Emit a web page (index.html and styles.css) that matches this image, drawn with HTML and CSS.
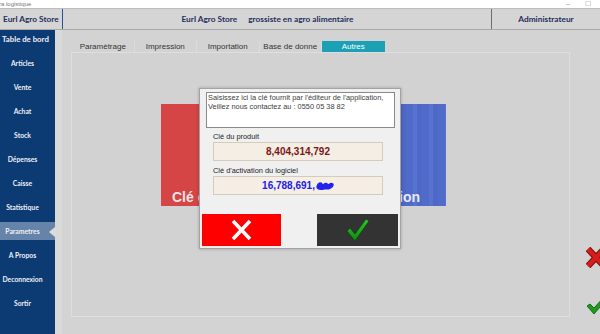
FILE: index.html
```html
<!DOCTYPE html>
<html lang="fr">
<head>
<meta charset="utf-8">
<title>Eurl Agro Store</title>
<link rel="stylesheet" href="styles.css">
</head>
<body>
<div class="titlebar">
  <span class="apptitle">ra logistique</span>
  <span class="winctl"><span>–</span><span>☐</span></span>
</div>
<header class="header">
  <div class="brand">Eurl Agro Store</div>
  <div class="headline"><span>Eurl Agro Store</span><span>grossiste en agro alimentaire</span></div>
  <div class="user">Administrateur</div>
</header>
<div class="app">
  <nav class="sidebar">
    <div class="navitem first">Table de bord</div>
    <div class="navitem">Articles</div>
    <div class="navitem">Vente</div>
    <div class="navitem">Achat</div>
    <div class="navitem">Stock</div>
    <div class="navitem">Dépenses</div>
    <div class="navitem">Caisse</div>
    <div class="navitem">Statistique</div>
    <div class="navitem active">Parametres</div>
    <div class="navitem">A Propos</div>
    <div class="navitem">Deconnexion</div>
    <div class="navitem">Sortir</div>
  </nav>
  <main class="main">
    <div class="tabarea">
      <div class="tabs">
        <div class="tab">Paramètrage</div>
        <div class="tab">Impression</div>
        <div class="tab">Importation</div>
        <div class="tab">Base de donne</div>
        <div class="tab active">Autres</div>
      </div>
      <div class="panel">
        <div class="tiles">
          <div class="tile tile-red">Clé d'activation</div>
          <div class="tile tile-blue">Activation</div>
        </div>
      </div>
    </div>
    <div class="actions">
      <svg class="side-x" width="20" height="21" viewBox="0 0 20 21">
        <path d="M2 2 L18 19 M18 2 L2 19" stroke="#7a0c0c" stroke-width="6.5" fill="none"/>
        <path d="M2 2 L18 19 M18 2 L2 19" stroke="#d71c1c" stroke-width="4.5" fill="none"/>
      </svg>
      <svg class="side-check" width="20" height="17" viewBox="0 0 20 17">
        <polygon points="0,9 3,7 7,11 17,0 20,2 7,17" fill="#1c9c1c" stroke="#0b560b" stroke-width="0.8"/>
      </svg>
    </div>
  </main>
</div>

<div class="dialog">
  <div class="note">Saisissez ici la clé fournit par l'éditeur de l'application,<br>Veillez nous contactez au : 0550 05 38 82</div>
  <div class="label">Clé du produit</div>
  <div class="field field-product">8,404,314,792</div>
  <div class="label">Clé d'activation du logiciel</div>
  <div class="field field-key">16,788,691,<svg class="blob" width="18" height="10" viewBox="0 0 18 10"><path d="M1.5 6.5 C2 2,5 1.5,6 4 C7 7,9 1,11 3.5 C13 6,14 1.5,16.5 3.5 C17 6,12 8,9 7 C6 8,3 9,1.5 6.5 Z" fill="#2323ee" stroke="#2323ee" stroke-width="2.4" stroke-linejoin="round"/></svg></div>
  <div class="buttons">
    <div class="btn btn-cancel">
      <svg width="21" height="22" viewBox="0 0 21 22"><path d="M2 2 L19 20 M19 2 L2 20" stroke="#ffffff" stroke-width="3.6" fill="none"/></svg>
    </div>
    <div class="btn btn-ok">
      <svg width="22" height="22" viewBox="0 0 22 22">
        <defs><linearGradient id="g" x1="0" y1="0" x2="0" y2="1"><stop offset="0" stop-color="#33c433"/><stop offset="1" stop-color="#0d8a0d"/></linearGradient></defs>
        <polygon points="0,12 3,9 8,15 19,0 22,2 8,22" fill="url(#g)" stroke="#0a4a0a" stroke-width="0.8"/>
      </svg>
    </div>
  </div>
</div>
</body>
</html>
```
FILE: styles.css
```css
* { box-sizing: border-box; }

body {
  margin: 0;
  width: 600px;
  height: 334px;
  overflow: hidden;
  position: relative;
  background: #d3d3d3;
  font-family: "Liberation Sans", Arial, sans-serif;
}

.titlebar {
  height: 8px;
  background: #ffffff;
  display: flex;
  justify-content: space-between;
  align-items: center;
  font-size: 6px;
  line-height: 8px;
  color: #777777;
}

.apptitle { margin-left: -1px; }

.winctl {
  display: flex;
  gap: 15px;
  margin-right: 9px;
  font-size: 7px;
  color: #9a9a9a;
}

.header {
  display: flex;
  height: 22px;
  border-top: 1px solid #bdbdbd;
  border-bottom: 1px solid #a9a9a9;
  background: #d5d5d5;
  font-family: Lato, "Liberation Sans", sans-serif;
  font-weight: 700;
  font-size: 8.3px;
  color: #1d2f5c;
}

.brand {
  width: 63px;
  padding-left: 3px;
  border-right: 1px solid #2f4f9c;
  display: flex;
  align-items: center;
}

.headline {
  flex: 1;
  display: flex;
  justify-content: center;
  align-items: center;
  gap: 11px;
  padding-right: 19px;
  border-right: 1px solid #6d6d6d;
}

.user {
  width: 108px;
  display: flex;
  justify-content: center;
  align-items: center;
}

.app {
  display: flex;
  height: 304px;
}

.sidebar {
  width: 55px;
  flex: none;
  background: #0c3a73;
  display: flex;
  flex-direction: column;
  gap: 6px;
  font-family: Lato, "Liberation Sans", sans-serif;
  font-weight: 700;
  font-size: 6.8px;
  color: #eef0f6;
}

.navitem {
  height: 18px;
  display: flex;
  align-items: center;
  justify-content: center;
  padding-right: 10px;
  position: relative;
  white-space: nowrap;
}

.navitem.first {
  justify-content: flex-start;
  padding-left: 2px;
  padding-right: 0;
  font-size: 7.8px;
}

.navitem.active {
  background: #6683aa;
}

.navitem.active::after {
  content: "";
  position: absolute;
  right: 0;
  top: 5px;
  border-right: 6px solid #dcdcdc;
  border-top: 5px solid transparent;
  border-bottom: 5px solid transparent;
}

.main {
  flex: 1;
  display: flex;
  border-left: 7px solid #d9d9d9;
  padding: 11px 0 0 9px;
  background: #d3d3d3;
}

.tabarea {
  width: 499px;
  flex: none;
  display: flex;
  flex-direction: column;
}

.tabs {
  display: flex;
  height: 11px;
  padding-left: 1px;
}

.tab {
  width: 62.5px;
  font-size: 8px;
  line-height: 11px;
  text-align: center;
  color: #333333;
  border-right: 1px solid #dcdcdc;
}

.tab.active {
  background: #1ca0b5;
  color: #ffffff;
  border-right: none;
}

.panel {
  height: 265px;
  border: 1px solid #dedede;
  background: #d2d2d2;
  padding: 51px 0 0 89px;
}

.tiles {
  display: flex;
  gap: 14px;
}

.tile {
  height: 102px;
  display: flex;
  align-items: flex-end;
  padding-bottom: 1px;
  font-size: 14px;
  line-height: 16px;
  font-weight: 700;
  color: #f3e6e7;
  white-space: nowrap;
}

.tile-red {
  width: 135px;
  padding-left: 11px;
  background: #d54545;
}

.tile-blue {
  width: 136px;
  justify-content: flex-end;
  padding-right: 26px;
  color: #e6eaf8;
  background: repeating-linear-gradient(90deg, #506bca 0 7px, #5772cf 7px 11px, #4d68c7 11px 16px);
}

.actions {
  display: flex;
  flex-direction: column;
  gap: 29px;
  padding: 206px 0 0 16px;
}

.side-x, .side-check { display: block; flex: none; }
.side-check { margin-left: 1px; }

.dialog {
  position: absolute;
  left: 199px;
  top: 88px;
  width: 202px;
  background: #f0f0f0;
  border: 1px solid #a3a3a3;
  box-shadow: 0 0 3px rgba(0, 0, 0, 0.25);
  padding: 3px 2px 2px 2px;
}

.note {
  width: 189px;
  height: 36px;
  margin-left: 4px;
  background: #ffffff;
  border: 1px solid #8a8a8a;
  padding: 0 1px;
  font-size: 7.4px;
  line-height: 9px;
  color: #3c3c3c;
  white-space: nowrap;
}

.label {
  margin: 4px 0 1px 11px;
  font-size: 7.4px;
  line-height: 9px;
  color: #222222;
}

.note + .label { margin-top: 4px; }
.field + .label { margin-top: 5px; }

.field {
  width: 170px;
  height: 19px;
  margin-left: 11px;
  background: #f4eee5;
  border: 1px solid #d5cbbd;
  display: flex;
  align-items: center;
  justify-content: center;
  font-size: 10px;
  font-weight: 700;
}

.field-product { color: #7c1515; }
.field-key { color: #2020e8; }

.blob { display: block; margin-left: 1px; }

.buttons {
  margin-top: 19px;
  display: flex;
  justify-content: space-between;
}

.btn {
  height: 32px;
  display: flex;
  align-items: center;
  justify-content: center;
}

.btn-cancel {
  width: 79px;
  background: #ff0000;
}

.btn-ok {
  width: 81px;
  background: #333333;
}
```
